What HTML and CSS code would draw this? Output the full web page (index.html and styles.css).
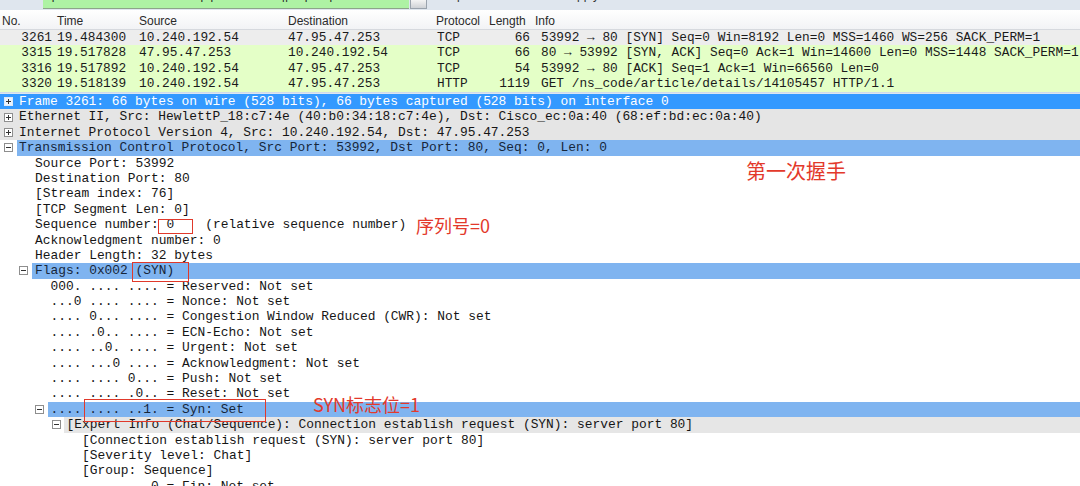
FILE: index.html
```html
<!DOCTYPE html>
<html>
<head>
<meta charset="utf-8">
<link rel="stylesheet" href="styles.css">
</head>
<body>
<div class="toolbar">
  <div class="filter"><span class="ftext">ip.src==10.240.192.54 &amp;&amp; tcp.port==53992 || http.request</span></div>
  <div class="fbtn"></div>
  <div class="tblinks"><span>Expression...</span><span>Clear</span><span>Apply</span><span>Save</span></div>
</div>

<div class="plist">
  <div class="prow phead"><span class="c">No.</span><span class="c">Time</span><span class="c">Source</span><span class="c">Destination</span><span class="c">Protocol</span><span class="c">Length</span><span class="c">Info</span></div>
  <div class="prow pdata sel"><span class="no">3261</span><span class="c">19.484300</span><span class="c">10.240.192.54</span><span class="c">47.95.47.253</span><span class="pr">TCP</span><span class="len">66</span><span class="info">53992 → 80 [SYN] Seq=0 Win=8192 Len=0 MSS=1460 WS=256 SACK_PERM=1</span></div>
  <div class="prow pdata grn"><span class="no">3315</span><span class="c">19.517828</span><span class="c">47.95.47.253</span><span class="c">10.240.192.54</span><span class="pr">TCP</span><span class="len">66</span><span class="info">80 → 53992 [SYN, ACK] Seq=0 Ack=1 Win=14600 Len=0 MSS=1448 SACK_PERM=1</span></div>
  <div class="prow pdata grn"><span class="no">3316</span><span class="c">19.517892</span><span class="c">10.240.192.54</span><span class="c">47.95.47.253</span><span class="pr">TCP</span><span class="len">54</span><span class="info">53992 → 80 [ACK] Seq=1 Ack=1 Win=66560 Len=0</span></div>
  <div class="prow pdata grn"><span class="no">3320</span><span class="c">19.518139</span><span class="c">10.240.192.54</span><span class="c">47.95.47.253</span><span class="pr">HTTP</span><span class="len">1119</span><span class="info">GET /ns_code/article/details/14105457 HTTP/1.1</span></div>
</div>

<div class="splitter"></div>

<div class="tree">
  <div class="trow l0 blue"><span class="gut"><i class="exp plus"></i></span><span class="lbl">Frame 3261: 66 bytes on wire (528 bits), 66 bytes captured (528 bits) on interface 0</span></div>
  <div class="trow l0 gray"><span class="gut"><i class="exp plus"></i></span><span class="lbl">Ethernet II, Src: HewlettP_18:c7:4e (40:b0:34:18:c7:4e), Dst: Cisco_ec:0a:40 (68:ef:bd:ec:0a:40)</span></div>
  <div class="trow l0 gray"><span class="gut"><i class="exp plus"></i></span><span class="lbl">Internet Protocol Version 4, Src: 10.240.192.54, Dst: 47.95.47.253</span></div>
  <div class="trow l0 hl"><span class="gut"><i class="exp"></i></span><span class="lbl">Transmission Control Protocol, Src Port: 53992, Dst Port: 80, Seq: 0, Len: 0</span></div>
  <div class="trow l1"><span class="gut"></span><span class="lbl">Source Port: 53992</span></div>
  <div class="trow l1"><span class="gut"></span><span class="lbl">Destination Port: 80</span></div>
  <div class="trow l1"><span class="gut"></span><span class="lbl">[Stream index: 76]</span></div>
  <div class="trow l1"><span class="gut"></span><span class="lbl">[TCP Segment Len: 0]</span></div>
  <div class="trow l1"><span class="gut"></span><span class="lbl">Sequence number: 0    (relative sequence number)</span></div>
  <div class="trow l1"><span class="gut"></span><span class="lbl">Acknowledgment number: 0</span></div>
  <div class="trow l1"><span class="gut"></span><span class="lbl">Header Length: 32 bytes</span></div>
  <div class="trow l1 hl"><span class="gut"><i class="exp"></i></span><span class="lbl">Flags: 0x002 (SYN)</span></div>
  <div class="trow l2"><span class="gut"></span><span class="lbl">000. .... .... = Reserved: Not set</span></div>
  <div class="trow l2"><span class="gut"></span><span class="lbl">...0 .... .... = Nonce: Not set</span></div>
  <div class="trow l2"><span class="gut"></span><span class="lbl">.... 0... .... = Congestion Window Reduced (CWR): Not set</span></div>
  <div class="trow l2"><span class="gut"></span><span class="lbl">.... .0.. .... = ECN-Echo: Not set</span></div>
  <div class="trow l2"><span class="gut"></span><span class="lbl">.... ..0. .... = Urgent: Not set</span></div>
  <div class="trow l2"><span class="gut"></span><span class="lbl">.... ...0 .... = Acknowledgment: Not set</span></div>
  <div class="trow l2"><span class="gut"></span><span class="lbl">.... .... 0... = Push: Not set</span></div>
  <div class="trow l2"><span class="gut"></span><span class="lbl">.... .... .0.. = Reset: Not set</span></div>
  <div class="trow l2 hl"><span class="gut"><i class="exp"></i></span><span class="lbl">.... .... ..1. = Syn: Set</span></div>
  <div class="trow l3 gray"><span class="gut"><i class="exp"></i></span><span class="lbl">[Expert Info (Chat/Sequence): Connection establish request (SYN): server port 80]</span></div>
  <div class="trow l4"><span class="gut"></span><span class="lbl">[Connection establish request (SYN): server port 80]</span></div>
  <div class="trow l4"><span class="gut"></span><span class="lbl">[Severity level: Chat]</span></div>
  <div class="trow l4"><span class="gut"></span><span class="lbl">[Group: Sequence]</span></div>
  <div class="trow l2"><span class="gut"></span><span class="lbl">.... .... ...0 = Fin: Not set</span></div>

  <div class="note n1">第一次握手</div>
  <div class="note n2">序列号=0</div>
  <div class="note n3">SYN标志位=1</div>
  <div class="rbox b1"></div>
  <div class="rbox b2"></div>
  <div class="rbox b3"></div>
</div>
</body>
</html>
```

FILE: styles.css
```css
* { box-sizing: border-box; }
html, body { margin: 0; padding: 0; }
body {
  width: 1080px;
  height: 486px;
  overflow: hidden;
  background: #ffffff;
  font-family: "Liberation Mono", "DejaVu Sans Mono", monospace;
  color: #1c1c1c;
}

/* top toolbar (mostly cut off) */
.toolbar {
  height: 10px;
  background: #dfe6ee;
  display: flex;
  overflow: hidden;
}
.filter {
  margin-left: 43px;
  width: 366px;
  height: 9px;
  background: #aef2a4;
  border-bottom: 1px solid #8da48a;
  overflow: hidden;
}
.ftext {
  display: block;
  margin-top: -12px;
  padding-left: 6px;
  font: 12px "Liberation Sans", sans-serif;
  line-height: 14px;
  color: #222;
  white-space: nowrap;
}
.fbtn {
  width: 17px;
  height: 9px;
  margin-left: 1px;
  background: linear-gradient(#f4f4f4, #cfd2d6);
  border: 1px solid #9aa3ad;
  border-top: none;
}
.tblinks {
  display: flex;
  gap: 14px;
  margin-left: 16px;
  height: 10px;
  overflow: hidden;
}
.tblinks span {
  display: block;
  margin-top: -12px;
  font: 12px "Liberation Sans", sans-serif;
  line-height: 14px;
  color: #333;
  white-space: nowrap;
}

/* packet list */
.prow {
  display: grid;
  grid-template-columns: 54px 82px 149px 148px 53px 46px 1fr;
  white-space: nowrap;
}
.phead {
  height: 19.5px;
  background: linear-gradient(#ffffff, #f2f3f5);
  border-bottom: 1px solid #d6d9de;
  font: 12px "Liberation Sans", sans-serif;
  line-height: 22px;
  color: #2a2a2a;
}
.phead .c { padding-left: 3px; }
.phead .c:first-child { padding-left: 2px; }
.pdata {
  height: 15.5px;
  line-height: 15.5px;
  font-size: 12.8px;
  color: #1a1a1a;
}
.pdata .no { text-align: right; padding-right: 2px; }
.pdata .c { padding-left: 3px; }
.pdata .pr { padding-left: 4px; }
.pdata .len { text-align: right; padding-right: 2px; }
.pdata .info { padding-left: 9px; overflow: hidden; }
.sel { background: #ededed; }
.grn { background: #e4ffc7; }

.splitter {
  height: 2.5px;
  background: linear-gradient(#c9d6e6, #e4ebf3);
}

/* details tree */
.tree {
  position: relative;
  font-size: 12.9px;
  color: #151515;
}
.trow {
  display: flex;
  height: 15.4px;
  line-height: 15.4px;
  white-space: pre;
}
.gut {
  flex: none;
  display: flex;
  align-items: center;
}
.lbl {
  flex: 1;
  height: 100%;
  overflow: hidden;
}
.l0 .gut { width: 17px; }
.l0 .lbl { padding-left: 2px; }
.l0 .exp { margin-left: 4px; }
.l1 .gut { width: 32px; }
.l1 .lbl { padding-left: 3px; }
.l1 .exp { margin-left: 19px; }
.l2 .gut { width: 48px; }
.l2 .lbl { padding-left: 2.5px; }
.l2 .exp { margin-left: 35px; }
.l3 .gut { width: 64px; }
.l3 .lbl { padding-left: 2.5px; }
.l3 .exp { margin-left: 52px; }
.l4 .gut { width: 80px; }
.l4 .lbl { padding-left: 2px; }

.blue { background: #3399ff; color: #ffffff; }
.l0.gray { background: #e5e5e5; }
.l3.gray .lbl { background: #e6e6e6; }
.hl .lbl { background: #7fb4f0; color: #16263a; }

.exp {
  position: relative;
  display: block;
  width: 9px;
  height: 9px;
  border: 1px solid #8e8e8e;
  background: #ffffff;
}
.exp::before {
  content: "";
  position: absolute;
  left: 1px;
  top: 3px;
  width: 5px;
  height: 1px;
  background: #333;
}
.exp.plus::after {
  content: "";
  position: absolute;
  left: 3px;
  top: 1px;
  width: 1px;
  height: 5px;
  background: #333;
}
.blue .exp { border-color: #dfe9f5; background: #eaf3ff; }

/* red annotations drawn over the tree */
.note {
  position: absolute;
  color: #e3392b;
  font-family: "Noto Sans CJK SC", "Noto Sans", sans-serif;
  white-space: nowrap;
}
.n1 { left: 746px; top: 67px; font-size: 20px; line-height: 20px; }
.n2 { left: 416px; top: 122px; font-size: 18px; line-height: 18px; }
.n3 { left: 313px; top: 301px; font-size: 18px; line-height: 18px; }

.rbox {
  position: absolute;
  border: 1.5px solid #e0392b;
}
.b1 { left: 158px; top: 125px; width: 35px; height: 15px; }
.b2 { left: 132px; top: 168px; width: 57px; height: 20px; }
.b3 { left: 84px; top: 305px; width: 182px; height: 23px; }
```
